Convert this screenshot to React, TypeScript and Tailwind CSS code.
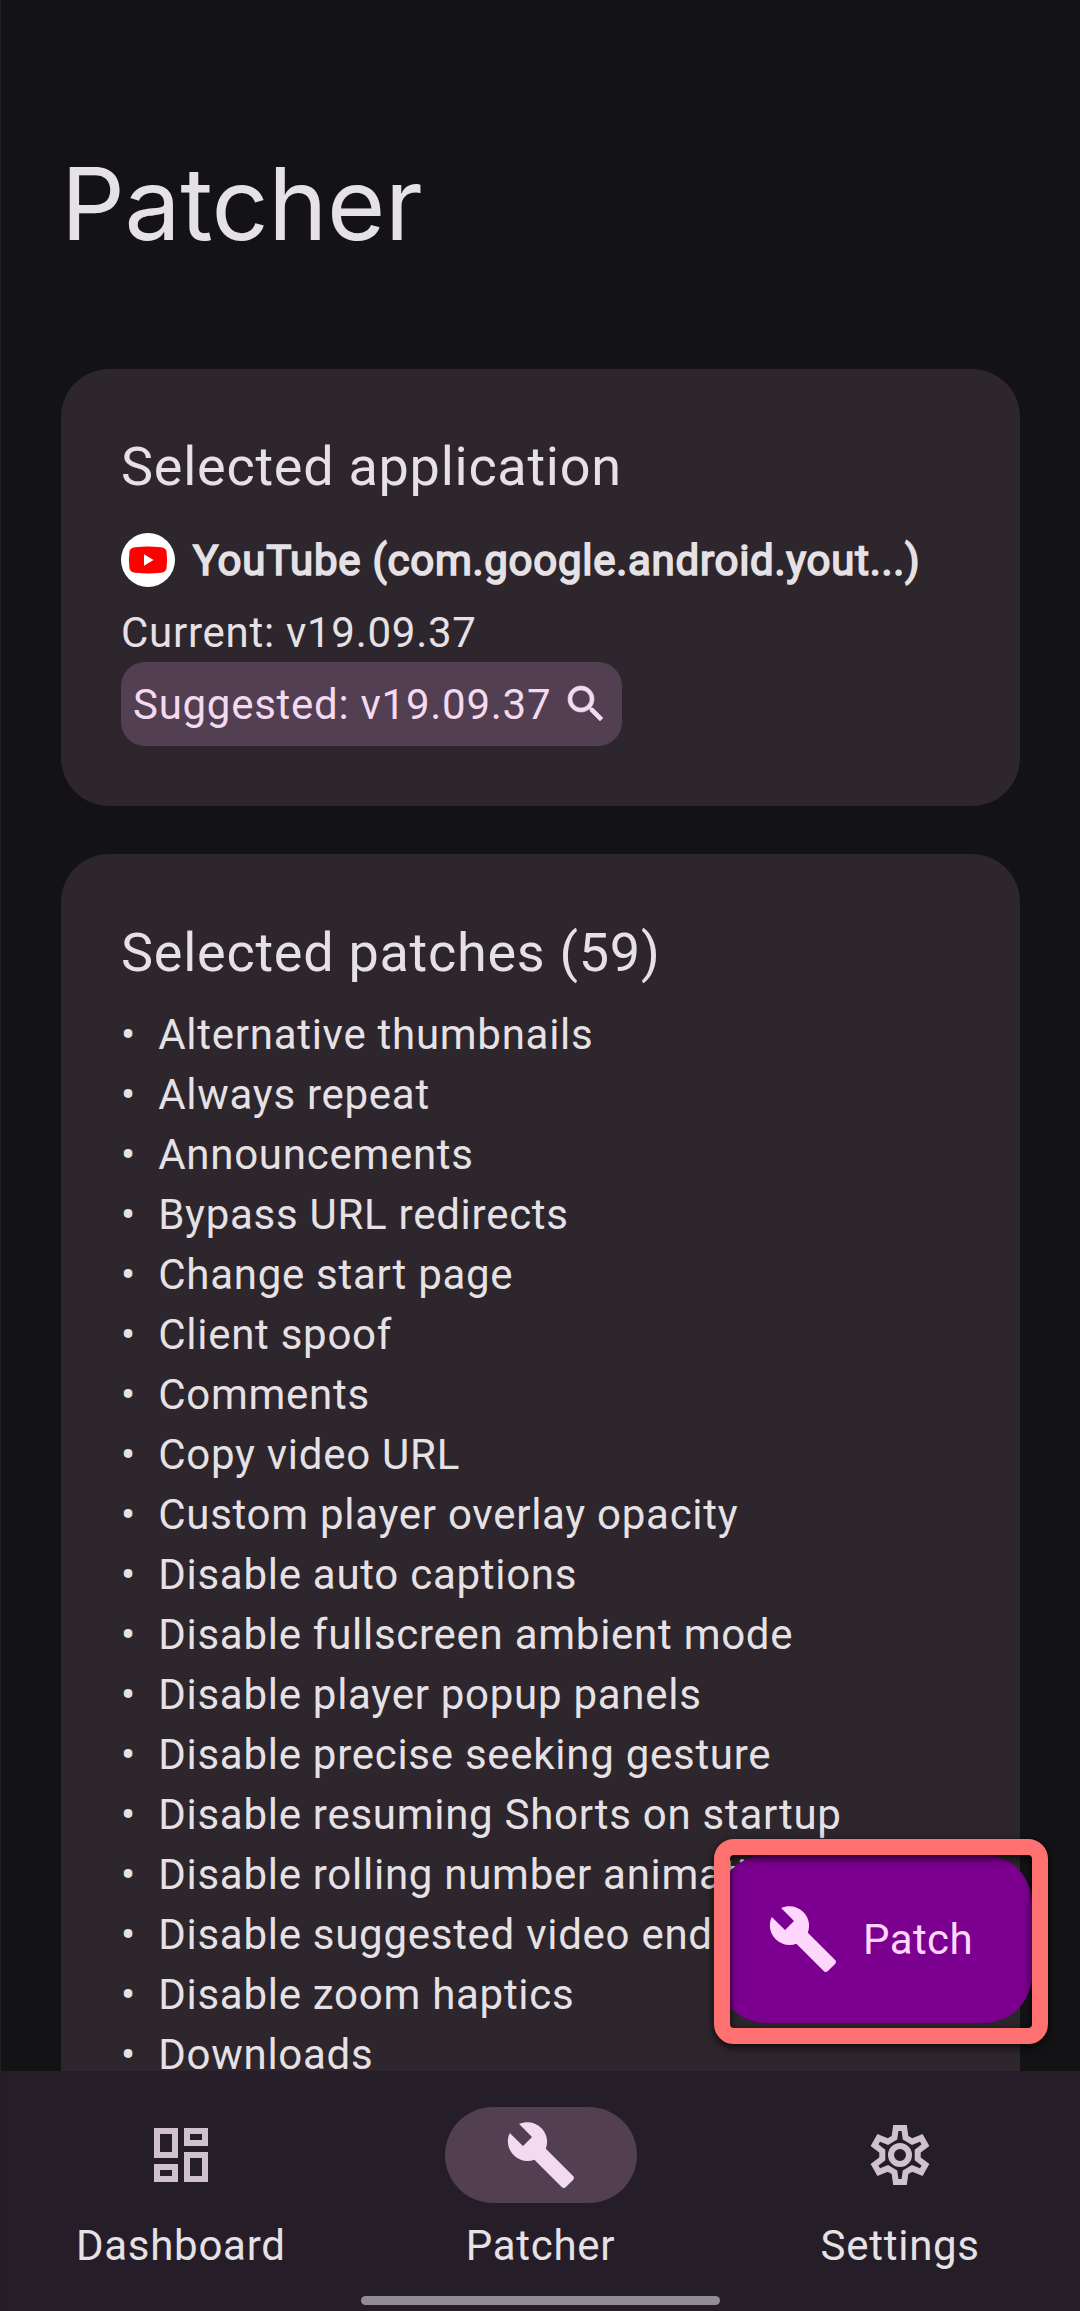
import React from "react";

const patches = [
  "Alternative thumbnails",
  "Always repeat",
  "Announcements",
  "Bypass URL redirects",
  "Change start page",
  "Client spoof",
  "Comments",
  "Copy video URL",
  "Custom player overlay opacity",
  "Disable auto captions",
  "Disable fullscreen ambient mode",
  "Disable player popup panels",
  "Disable precise seeking gesture",
  "Disable resuming Shorts on startup",
  "Disable rolling number animations",
  "Disable suggested video end screen",
  "Disable zoom haptics",
  "Downloads",
];

function WrenchIcon({ className }: { className: string }) {
  return (
    <svg viewBox="0 0 24 24" fill="currentColor" className={className}>
      <path d="M22.7 19l-9.1-9.1c.9-2.3.4-5-1.5-6.9-2-2-5-2.4-7.4-1.3L9 6 6 9 1.6 4.7C.4 7.1.9 10.1 2.9 12.1c1.9 1.9 4.6 2.4 6.9 1.5l9.1 9.1c.4.4 1 .4 1.4 0l2.3-2.3c.5-.4.5-1.1.1-1.4z" />
    </svg>
  );
}

function DashboardIcon() {
  return (
    <svg viewBox="0 0 24 24" fill="currentColor" className="size-[72px]">
      <path d="M19 5v2h-4V5h4M9 5v6H5V5h4m10 8v6h-4v-6h4M9 17v2H5v-2h4M21 3h-8v6h8V3zM11 3H3v10h8V3zm10 8h-8v10h8V11zm-10 4H3v6h8v-6z" />
    </svg>
  );
}

function SearchIcon() {
  return (
    <svg viewBox="0 0 24 24" fill="currentColor" stroke="currentColor" strokeWidth="0.3" className="size-12 shrink-0">
      <path d="M15.5 14h-.79l-.28-.27C15.41 12.59 16 11.11 16 9.5 16 5.91 13.09 3 9.5 3S3 5.91 3 9.5 5.91 16 9.5 16c1.61 0 3.09-.59 4.23-1.57l.27.28v.79l5 4.99L20.49 19l-4.99-5zm-6 0C7.01 14 5 11.99 5 9.5S7.01 5 9.5 5 14 7.01 14 9.5 11.99 14 9.5 14z" />
    </svg>
  );
}

// One cog tooth, repeated every 60 degrees around the centre.
const tooth = [
  [-1.85, -5.75],
  [-1.4, -9],
  [1.4, -9],
  [1.85, -5.75],
];
const cogPoints = [0, 60, 120, 180, 240, 300]
  .flatMap((deg) => {
    const a = (deg * Math.PI) / 180;
    return tooth.map(
      ([x, y]) =>
        `${(12 + x * Math.cos(a) - y * Math.sin(a)).toFixed(2)},${(12 + x * Math.sin(a) + y * Math.cos(a)).toFixed(2)}`,
    );
  })
  .join(" ");

function SettingsIcon() {
  return (
    <svg viewBox="0 0 24 24" fill="none" stroke="currentColor" strokeWidth="2" className="size-[72px]">
      <polygon points={cogPoints} />
      <circle cx="12" cy="12" r="3" />
    </svg>
  );
}

function YouTubeIcon() {
  return (
    <svg viewBox="0 0 54 54" className="mt-[3px] size-[54px] shrink-0">
      <circle cx="27" cy="27" r="27" fill="#fff" />
      <path d="M14 14.3Q27 12.9 40 14.3Q45 14.8 45.6 19Q46.6 27 45.6 35Q45 39.2 40 39.7Q27 41.1 14 39.7Q9 39.2 8.4 35Q7.4 27 8.4 19Q9 14.8 14 14.3Z" fill="#f00" />
      <path d="M23 21.3L32.5 27L23 32.7Z" fill="#fff" />
    </svg>
  );
}

function NavItem({ label, active, children }: { label: string; active?: boolean; children: React.ReactNode }) {
  return (
    <div className="flex flex-1 flex-col items-center pt-9">
      <div
        className={
          active
            ? "flex h-24 w-48 items-center justify-center rounded-full bg-[#523f51] text-[#f4daf0]"
            : "flex h-24 w-48 items-center justify-center text-[#cfc2cc]"
        }
      >
        {children}
      </div>
      <div className="mt-[13px] leading-[60px]">{label}</div>
    </div>
  );
}

export default function App() {
  return (
    <div className="relative flex h-[2311px] w-[1080px] flex-col overflow-hidden border-l border-[#202022] bg-[#131315] font-[Roboto,sans-serif] text-[42px] tracking-[0.73px] text-[#e6e1e5]">
      <main className="flex h-[2071px] shrink-0 flex-col overflow-hidden px-[60px] pt-36">
        <h1 className="h-[225px] shrink-0 font-[Inter,sans-serif] text-[100px] leading-[120px] tracking-[-0.4px]">Patcher</h1>

        <section className="h-[437px] shrink-0 rounded-[48px] bg-[#2d262d] px-[60px] pt-[62px]">
          <h2 className="text-[54px] leading-[72px]">Selected application</h2>
          <div className="mt-[27px] flex h-[60px] items-start gap-[18px]">
            <YouTubeIcon />
            <div className="mt-px leading-[60px] whitespace-nowrap [-webkit-text-stroke:1.7px_#e6e1e5]">
              YouTube (com.google.android.yout...)
            </div>
          </div>
          <div className="mt-[13px] leading-[60px]">Current: v19.09.37</div>
          <div className="-mt-px flex h-[84px] w-fit items-center gap-[11px] rounded-3xl bg-[#523f51] px-3 leading-[60px] text-[#f4daf0]">
            <span className="pt-0.5">Suggested: v19.09.37</span>
            <SearchIcon />
          </div>
        </section>

        <section className="mt-12 shrink-0 rounded-[48px] bg-[#2d262d] px-[60px] pt-[63px] pb-[60px]">
          <h2 className="text-[54px] leading-[72px]">Selected patches (59)</h2>
          <ul className="mt-4">
            {patches.map((name) => (
              <li key={name} className="leading-[59.98px] whitespace-pre">
                {"•  " + name}
              </li>
            ))}
          </ul>
        </section>
      </main>

      <nav className="flex h-[240px] shrink-0 bg-[#251e28]">
        <NavItem label="Dashboard">
          <DashboardIcon />
        </NavItem>
        <NavItem label="Patcher" active>
          <WrenchIcon className="size-[72px]" />
        </NavItem>
        <NavItem label="Settings">
          <SettingsIcon />
        </NavItem>
      </nav>

      <button className="absolute top-[1855px] left-[717px] flex h-[168px] w-[314px] items-center gap-6 rounded-[48px] bg-[#7b008f] pl-[49px] text-[#ffd6fd]">
        <WrenchIcon className="size-[72px]" />
        <span className="tracking-[0.4px]">Patch</span>
      </button>
      <div className="absolute top-[1839px] left-[713px] h-[205px] w-[334px] rounded-[20px] border-[16px] border-[#ff7070] drop-shadow-[0_3px_4px_rgba(0,0,0,0.8)]" />

      <div className="absolute top-[2296px] left-[360px] h-[9px] w-[359px] rounded-full bg-[#928d92]" />
    </div>
  );
}
